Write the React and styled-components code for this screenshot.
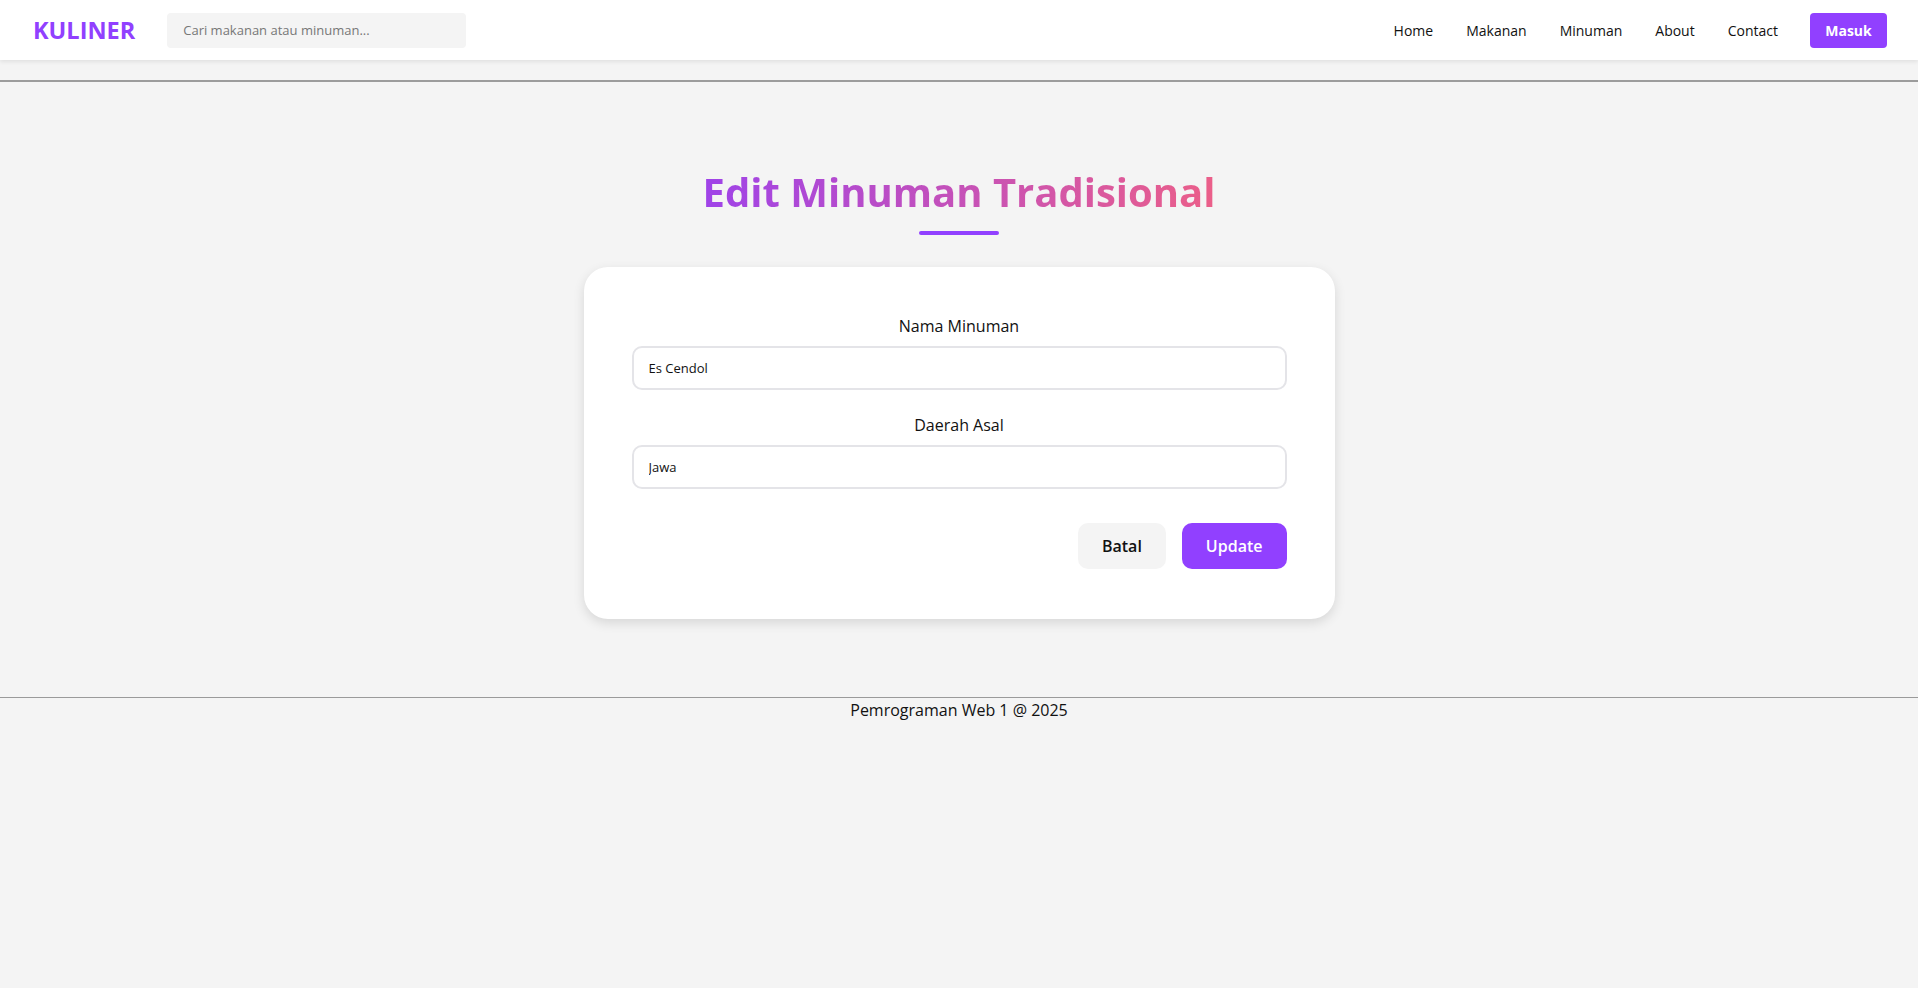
import React from "react";
import styled, { createGlobalStyle } from "styled-components";

const GlobalStyle = createGlobalStyle`
  html, body {
    margin: 0;
    padding: 0;
    background: #f4f4f4;
    font-family: "Open Sans", "Noto Sans", sans-serif;
    color: #111;
  }
  * { box-sizing: border-box; }
`;

const Header = styled.header`
  height: 60px;
  background: #fff;
  display: flex;
  align-items: center;
  gap: 32px;
  padding: 0 31px 0 33px;
  box-shadow: 0 2px 4px rgba(0, 0, 0, 0.08);
  position: relative;
  z-index: 1;
`;

const Logo = styled.div`
  font-size: 23.5px;
  font-weight: 700;
  color: #9140ff;
`;

const Search = styled.input`
  width: 299px;
  height: 35px;
  border: none;
  outline: none;
  border-radius: 4px;
  background: #f4f4f4;
  padding: 0 16px;
  font-family: inherit;
  font-size: 13px;
  color: #333;
  &::placeholder { color: #777; }
`;

const Nav = styled.nav`
  margin-left: auto;
  display: flex;
  align-items: center;
  gap: 33px;
`;

const NavLink = styled.a`
  font-size: 14px;
  color: #111;
  text-decoration: none;
`;

const LoginButton = styled.button`
  height: 35px;
  width: 77px;
  margin-left: -1px;
  border: none;
  border-radius: 4px;
  background: #9140ff;
  color: #fff;
  font-family: inherit;
  font-weight: 700;
  font-size: 14px;
`;

const Divider = styled.hr`
  margin: 20px 0 0;
  border: 1px solid #9c9c9c;
  background: #e6e6e6;
  height: 1px;
`;

const Main = styled.main`
  display: flex;
  flex-direction: column;
  align-items: center;
  padding: 83px 0 78px;
`;

const Title = styled.h1`
  margin: 0;
  font-size: 40px;
  font-weight: 700;
  line-height: 54px;
  background: linear-gradient(90deg, #9f43e8, #eb5f89);
  -webkit-background-clip: text;
  background-clip: text;
  color: transparent;
`;

const TitleBar = styled.div`
  width: 80px;
  height: 4px;
  border-radius: 2px;
  background: #9140ff;
  margin-top: 12px;
`;

const Card = styled.form`
  margin-top: 32px;
  width: 751px;
  background: #fff;
  border-radius: 24px;
  padding: 48px 48px 50px;
  box-shadow: 0 4px 12px rgba(0, 0, 0, 0.12);
  display: flex;
  flex-direction: column;
`;

const Field = styled.div`
  display: flex;
  flex-direction: column;
  align-items: stretch;
  & + & { margin-top: 24px; }
`;

const Label = styled.label`
  text-align: center;
  font-size: 16px;
  font-weight: 500;
  line-height: 22px;
  margin-bottom: 9px;
  color: #111;
`;

const TextInput = styled.input`
  height: 44px;
  border: 2px solid #e4e4e8;
  border-radius: 10px;
  padding: 0 15px;
  font-family: inherit;
  font-size: 13px;
  color: #111;
  outline: none;
  background: #fff;
`;

const Actions = styled.div`
  display: flex;
  justify-content: flex-end;
  gap: 16px;
  margin-top: 34px;
`;

const ActionButton = styled.button`
  height: 46px;
  padding: 0 24px;
  border: none;
  border-radius: 10px;
  font-family: inherit;
  font-size: 16px;
  font-weight: 600;
  background: ${(p) => (p.$primary ? "#9140ff" : "#f4f4f4")};
  color: ${(p) => (p.$primary ? "#fff" : "#111")};
`;

const Footer = styled.footer`
  border-top: 1px solid #9a9a9a;
  text-align: center;
  font-size: 16px;
  line-height: 22px;
  padding-top: 1px;
  color: #111;
`;

export default function App() {
  return (
    <>
      <GlobalStyle />
      <Header>
        <Logo>KULINER</Logo>
        <Search placeholder="Cari makanan atau minuman..." />
        <Nav>
          <NavLink href="#">Home</NavLink>
          <NavLink href="#">Makanan</NavLink>
          <NavLink href="#">Minuman</NavLink>
          <NavLink href="#">About</NavLink>
          <NavLink href="#">Contact</NavLink>
          <LoginButton>Masuk</LoginButton>
        </Nav>
      </Header>
      <Divider />
      <Main>
        <Title>Edit Minuman Tradisional</Title>
        <TitleBar />
        <Card onSubmit={(e) => e.preventDefault()}>
          <Field>
            <Label>Nama Minuman</Label>
            <TextInput defaultValue="Es Cendol" />
          </Field>
          <Field>
            <Label>Daerah Asal</Label>
            <TextInput defaultValue="Jawa" />
          </Field>
          <Actions>
            <ActionButton type="button">Batal</ActionButton>
            <ActionButton type="submit" $primary>Update</ActionButton>
          </Actions>
        </Card>
      </Main>
      <Footer>Pemrograman Web 1 @ 2025</Footer>
    </>
  );
}
